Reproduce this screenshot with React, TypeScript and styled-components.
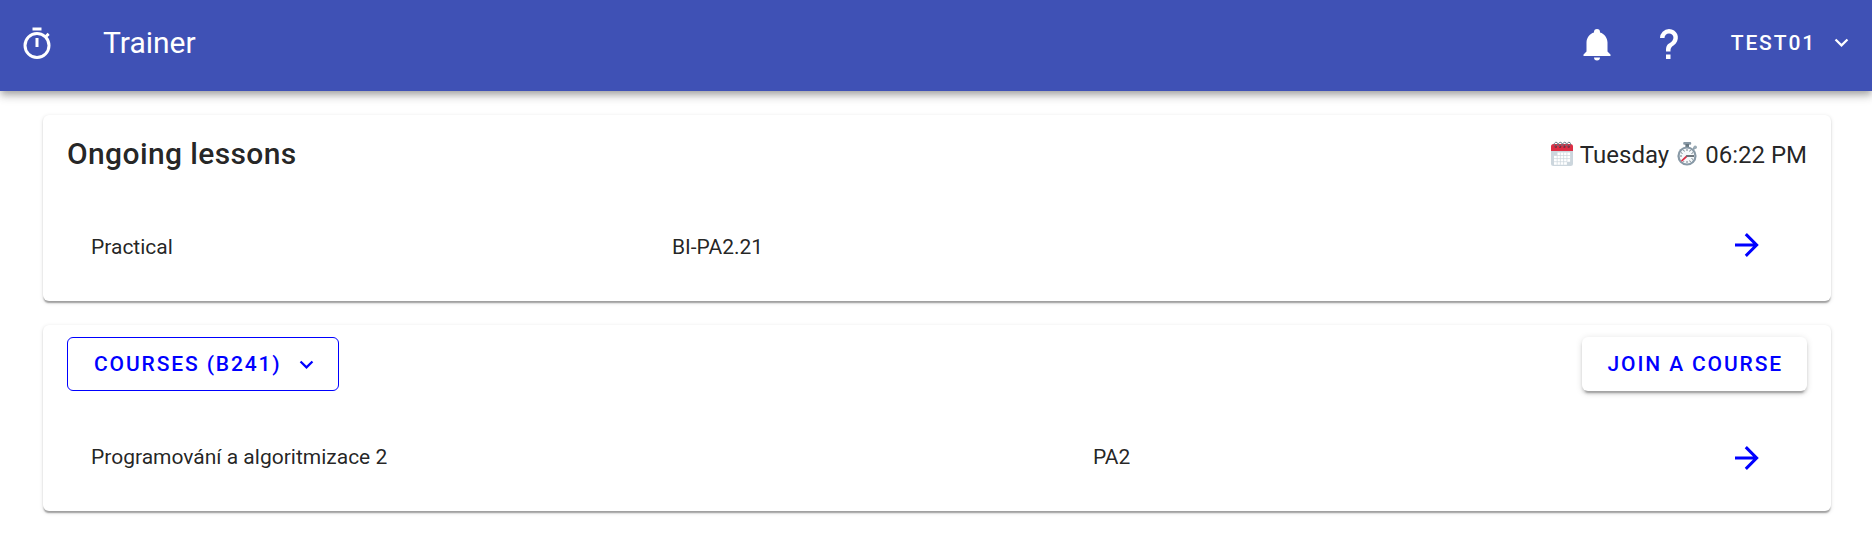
import React from 'react';
import styled, { createGlobalStyle } from 'styled-components';

const GlobalStyle = createGlobalStyle`
  * { box-sizing: border-box; }
  body {
    margin: 0;
    background: #fff;
    color: rgba(0, 0, 0, 0.87);
    font-family: Roboto, sans-serif;
    font-size: 24px;
    line-height: 36px;
  }
`;

const Page = styled.div`
  min-height: 100vh;
`;

const AppBar = styled.header`
  display: flex;
  align-items: center;
  height: 91px;
  padding: 0 17px 5px 19px;
  background: #3f51b5;
  color: #fff;
  box-shadow: 0 3px 6px -1.5px rgba(0, 0, 0, 0.2), 0 6px 7.5px rgba(0, 0, 0, 0.14),
    0 1.5px 15px rgba(0, 0, 0, 0.12);
`;

const Logo = styled.div`
  padding-top: 1px;
`;

const AppTitle = styled.div`
  flex: 1;
  margin-left: 48px;
  font-size: 30px;
`;

const Icon = styled.svg<{ $size?: number }>`
  display: block;
  flex: none;
  width: ${(p) => p.$size ?? 36}px;
  height: ${(p) => p.$size ?? 36}px;
  fill: currentColor;
`;

const BarActions = styled.div`
  display: flex;
  align-items: center;
  gap: 36px;
  padding-top: 1px;
`;

const buttonPadding = {
  text: '0 0 2px 8px',
  outlined: '0 17.5px 0 26px',
  raised: '0 24px 0 26px',
};

const Button = styled.button<{ $variant: 'text' | 'outlined' | 'raised' }>`
  display: flex;
  align-items: center;
  height: 54px;
  padding: ${(p) => buttonPadding[p.$variant]};
  border: ${(p) => (p.$variant === 'outlined' ? '1px solid #00f' : 'none')};
  border-radius: 6px;
  background: ${(p) => (p.$variant === 'raised' ? '#fff' : 'transparent')};
  color: ${(p) => (p.$variant === 'text' ? '#fff' : '#00f')};
  font: 500 21px Roboto, sans-serif;
  letter-spacing: 1.875px;
  white-space: nowrap;
  box-shadow: ${(p) =>
    p.$variant === 'raised'
      ? '0 4.5px 1.5px -3px rgba(0,0,0,.2), 0 3px 3px rgba(0,0,0,.14), 0 1.5px 7.5px rgba(0,0,0,.12)'
      : 'none'};

  svg { margin-left: ${(p) => (p.$variant === 'outlined' ? 11.5 : 12)}px; }
`;

const Main = styled.main`
  display: flex;
  flex-direction: column;
  gap: 24px;
  padding: 24px 41px 41px 43px;
`;

const Card = styled.section`
  height: 186px;
  padding: 12px 24px;
  border-radius: 6px;
  background: #fff;
  box-shadow: 0 3px 1.5px -1.5px rgba(0, 0, 0, 0.2), 0 1.5px 1.5px rgba(0, 0, 0, 0.14),
    0 1.5px 4.5px rgba(0, 0, 0, 0.12);
`;

const CardHeader = styled.div`
  display: flex;
  align-items: center;
  justify-content: space-between;
  height: 54px;
`;

const Heading = styled.h2`
  margin: 0;
  font-size: 30px;
  font-weight: 500;
  letter-spacing: 0.375px;
`;

const Clock = styled.div`
  display: flex;
  align-items: center;
  padding-top: 2px;
  white-space: pre;
`;

const Emoji = styled.svg`
  width: 24px;
  height: 26px;
  margin: 0 6px 3px 6px;
`;

const Row = styled.div<{ $columns: string }>`
  display: grid;
  grid-template-columns: ${(p) => p.$columns} 36px;
  align-items: center;
  height: 72px;
  margin-top: 30px;
  padding: 0 42px 0 24px;
  font-size: 21px;
`;

const RowLink = styled.a<{ $raised?: boolean }>`
  padding: ${(p) => (p.$raised ? '0 0 5px' : '1px 0 0')};
  color: #00f;
`;

const paths = {
  timer:
    'M12,20A7,7 0 0,1 5,13A7,7 0 0,1 12,6A7,7 0 0,1 19,13A7,7 0 0,1 12,20M19.03,7.39L20.45,5.97C20,5.46 19.55,5 19.04,4.56L17.62,6C16.07,4.74 14.12,4 12,4A9,9 0 0,0 3,13A9,9 0 0,0 12,22C17,22 21,17.97 21,13C21,10.88 20.26,8.93 19.03,7.39M11,14H13V8H11M15,1H9V3H15V1Z',
  bell:
    'M21,19V20H3V19L5,17V11C5,7.9 7.03,5.17 10,4.29C10,4.19 10,4.1 10,4A2,2 0 0,1 12,2A2,2 0 0,1 14,4C14,4.1 14,4.19 14,4.29C16.97,5.17 19,7.9 19,11V17L21,19M14,21A2,2 0 0,1 12,23A2,2 0 0,1 10,21',
  help:
    'M10,19H13V22H10V19M12,2C17.35,2.22 19.68,7.62 16.5,11.67C15.67,12.67 14.33,13.33 13.67,14.17C13,15 13,16 13,17H10C10,15.33 10,13.92 10.67,12.92C11.33,11.92 12.67,11.33 13.5,10.67C15.92,8.43 15.32,5.26 12,5A3,3 0 0,0 9,8H6A6,6 0 0,1 12,2Z',
  chevron: 'M7.41,8.58L12,13.17L16.59,8.58L18,10L12,16L6,10L7.41,8.58Z',
  arrow: 'M4,11V13H16L10.5,18.5L11.92,19.92L19.84,12L11.92,4.08L10.5,5.5L16,11H4Z',
};

const MdIcon = ({ name, size }: { name: keyof typeof paths; size?: number }) => (
  <Icon viewBox="0 0 24 24" $size={size}>
    <path d={paths[name]} />
  </Icon>
);

const Calendar = () => (
  <Emoji viewBox="0 0 24 26">
    <path d="M1 9h22v13.5a2.5 2.5 0 0 1-2.5 2.5h-17A2.5 2.5 0 0 1 1 22.5z" fill="#ccd6dd" />
    <path d="M1 10V5.5A2.5 2.5 0 0 1 3.5 3h17A2.5 2.5 0 0 1 23 5.5V10z" fill="#dd2e44" />
    <path d="M7.5 11.5h12.6v9.2h-3.2v3.1H4v-9.3h3.5z" fill="#fff" />
    <path
      d="M4 14.5h16.1M4 17.6h16.1M4 20.7h13M7.2 14.5v9.3M10.4 11.5v12.3M13.6 11.5v12.3M16.9 11.5v9.2"
      stroke="#ccd6dd"
      strokeWidth="0.7"
      fill="none"
    />
    {[5.5, 9.8, 14.1, 18.4].map((x) => (
      <g key={x} fill="none">
        <circle cx={x + 0.3} cy="5.7" r="1.2" fill="#792b3c" />
        <path
          d={`M${x} 5.8C${x - 2.4} 4 ${x - 1.2} 1.3 ${x + 0.6} 1.3S${x + 2.7} 3.4 ${x + 1} 5`}
          stroke="#66757f"
          strokeWidth="1"
        />
      </g>
    ))}
  </Emoji>
);

const Stopwatch = () => (
  <Emoji viewBox="0 0 24 26">
    <rect x="8.2" y="1" width="8" height="2.8" rx="1" fill="#8899a6" />
    <rect x="10.4" y="3" width="3.6" height="4" fill="#66757f" />
    <path d="m18.3 8 2.5-2.4" stroke="#8899a6" strokeWidth="2" />
    <circle cx="20.2" cy="6.2" r="1.8" fill="#9aaab4" />
    <circle cx="12" cy="15" r="9.6" fill="#8899a6" />
    <circle cx="12" cy="15" r="7.4" fill="#f5f8fa" />
    <path
      d="M12 8v2M12 20v2M5 15h2M8.5 9l.9 1.5M15.5 9l-.9 1.5M6 11.6l1.5.9M18 11.6l-1.5.9M18 18.4l-1.5-.9M15.5 21l-.9-1.5M8.5 21l.4-.8"
      stroke="#66757f"
      strokeWidth="0.9"
    />
    <path d="M12 15h7" stroke="#414b52" strokeWidth="1.5" />
    <path d="m12 15-5 4.6" stroke="#dd2e44" strokeWidth="1.7" strokeLinecap="round" />
    <circle cx="12" cy="15" r="1.1" fill="#66757f" />
  </Emoji>
);

export default function App() {
  return (
    <Page>
      <GlobalStyle />
      <AppBar>
        <Logo>
          <MdIcon name="timer" />
        </Logo>
        <AppTitle>Trainer</AppTitle>
        <BarActions>
          <MdIcon name="bell" />
          <MdIcon name="help" />
          <Button $variant="text">
            TEST01
            <MdIcon name="chevron" size={27} />
          </Button>
        </BarActions>
      </AppBar>
      <Main>
        <Card>
          <CardHeader>
            <Heading>Ongoing lessons</Heading>
            <Clock>
              <Calendar />
              <span>Tuesday</span>
              <Stopwatch />
              <span>06:22 PM</span>
            </Clock>
          </CardHeader>
          <Row $columns="581px 1fr">
            <span>Practical</span>
            <span>BI-PA2.21</span>
            <RowLink $raised>
              <MdIcon name="arrow" />
            </RowLink>
          </Row>
        </Card>
        <Card>
          <CardHeader>
            <Button $variant="outlined">
              COURSES (B241)
              <MdIcon name="chevron" size={27} />
            </Button>
            <Button $variant="raised">JOIN A COURSE</Button>
          </CardHeader>
          <Row $columns="1002px 1fr">
            <span>Programování a algoritmizace 2</span>
            <span>PA2</span>
            <RowLink>
              <MdIcon name="arrow" />
            </RowLink>
          </Row>
        </Card>
      </Main>
    </Page>
  );
}
